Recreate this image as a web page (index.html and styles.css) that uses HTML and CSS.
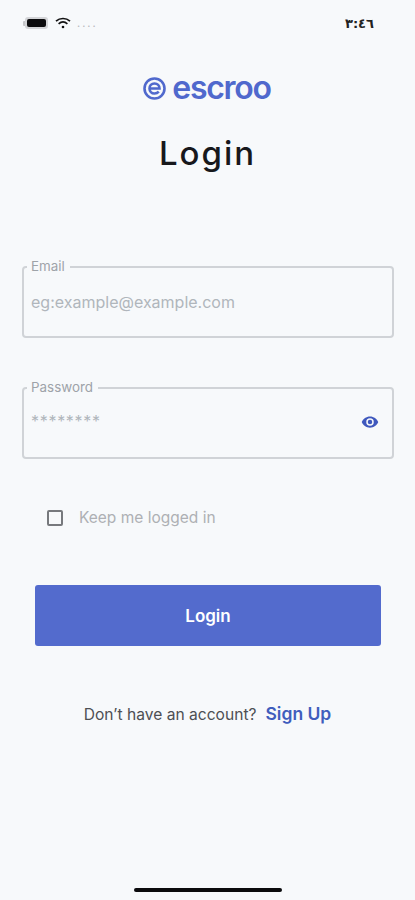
FILE: index.html
```html
<!DOCTYPE html>
<html lang="en">
<head>
    <meta charset="UTF-8">
    <meta name="viewport" content="width=device-width, initial-scale=1.0">
    <title>Login</title>
    <link rel="stylesheet" href="styles.css">
</head>
<body>
    <div class="page">
        <div class="status-bar">
            <div class="status-left">
                <div class="battery-tip"></div>
                <div class="battery"><div class="battery-fill"></div></div>
                <svg class="wifi" width="16" height="12" viewBox="0 0 16 12" fill="none" stroke="#111" stroke-width="1.7">
                    <path d="M1 4.2C5 .6 11 .6 15 4.2"/>
                    <path d="M3.6 6.8c2.6-2.2 6.2-2.2 8.800 0"/>
                    <circle cx="8" cy="10" r="1.3" fill="#111" stroke="none"/>
                </svg>
                <span class="carrier">....</span>
            </div>
            <span class="clock">٣:٤٦</span>
        </div>

        <div class="logo">
            <svg width="23" height="23" viewBox="0 0 23 23" fill="none" stroke="#5069cd" stroke-width="2.6">
                <circle cx="11.5" cy="11.5" r="10"/>
                <path d="M6.500 11.500h10c0-3-2-5-5-5s-5 2.200-5 5 2 5 5 5c1.800 0 3.200-.6 4.300-1.800"/>
            </svg>
            <span class="logo-text">escroo</span>
        </div>

        <h1>Login</h1>

        <form class="login-form">
            <fieldset class="field">
                <legend>Email</legend>
                <div class="field-row">
                    <span class="placeholder">eg:example@example.com</span>
                </div>
            </fieldset>
            <fieldset class="field password-field">
                <legend>Password</legend>
                <div class="field-row">
                    <span class="placeholder stars">********</span>
                    <svg class="eye" width="18" height="18" viewBox="0 0 24 24" fill="#3f58bd">
                        <path d="M12 4.500C7 4.500 2.700 7.600 1 12c1.700 4.400 6 7.500 11 7.500s9.300-3.100 11-7.500c-1.700-4.400-6-7.500-11-7.500zM12 17a5 5 0 1 1 0-10 5 5 0 0 1 0 10zm0-8a3 3 0 1 0 0 6 3 3 0 0 0 0-6z"/>
                    </svg>
                </div>
            </fieldset>

            <label class="keep-row">
                <span class="checkbox"></span>
                <span class="keep-text">Keep me logged in</span>
            </label>

            <button type="button" class="login-btn">Login</button>
        </form>

        <p class="signup-row">
            <span class="signup-text">Don’t have an account?</span>
            <a class="signup-link">Sign Up</a>
        </p>

        <div class="home-bar"></div>
    </div>
</body>
</html>
```

FILE: styles.css
```css
body {
    font-family: Inter, "Liberation Sans", sans-serif;
    margin: 0;
    padding: 0;
    background-color: #f7f9fb;
}
.page {
    height: 900px;
    display: flex;
    flex-direction: column;
    overflow: hidden;
}
.status-bar {
    display: flex;
    justify-content: space-between;
    align-items: center;
    height: 16px;
    padding: 15px 41px 0 23px;
}
.status-left {
    display: flex;
    align-items: center;
}
.battery-tip {
    width: 2px;
    height: 5px;
    background-color: #c4c5c8;
    border-radius: 1px 0 0 1px;
}
.battery {
    width: 23px;
    height: 12px;
    padding: 2px;
    box-sizing: border-box;
    background-color: #d4d5d8;
    border-radius: 3px;
}
.battery-fill {
    height: 100%;
    background-color: #0c0c0e;
    border-radius: 2px;
}
.wifi {
    margin-left: 7px;
}
.carrier {
    margin-left: 6px;
    font-size: 11px;
    line-height: 10px;
    letter-spacing: 2px;
    color: #b5b7bb;
}
.clock {
    font-family: "DejaVu Sans", sans-serif;
    font-size: 13px;
    font-weight: bold;
    letter-spacing: 0.5px;
    color: #222;
}
.logo {
    display: flex;
    justify-content: center;
    align-items: center;
    gap: 6px;
    margin-top: 41px;
    height: 32px;
    padding-right: 1px;
}
.logo-text {
    font-size: 32px;
    line-height: 32px;
    font-weight: 600;
    color: #5069cd;
    letter-spacing: -1.3px;
}
h1 {
    margin: 27px 0 0;
    text-align: center;
    font-size: 33px;
    line-height: 44px;
    font-weight: 500;
    letter-spacing: 2px;
    color: #17181c;
}
.login-form {
    display: flex;
    flex-direction: column;
    margin-top: 85px;
    padding: 0 21px 0 22px;
}
.field {
    height: 78px;
    box-sizing: border-box;
    margin: 0;
    padding: 0 13px 0 7px;
    border: 2px solid #d0d3d7;
    border-radius: 4px;
    min-width: 0;
}
.field legend {
    margin-left: -4px;
    padding: 0 5px 2px 4px;
    font-size: 13.4px;
    line-height: 12px;
    color: #9ea3a9;
}
.field-row {
    display: flex;
    align-items: center;
    justify-content: space-between;
    height: 56px;
}
.password-field {
    margin-top: 43px;
}
.placeholder {
    font-size: 16px;
    color: #b0b6bc;
}
.stars {
    margin-top: -4px;
    letter-spacing: 0.7px;
}
.eye {
    margin-top: -2px;
}
.keep-row {
    display: flex;
    align-items: center;
    margin-top: 49px;
    margin-left: 25px;
}
.checkbox {
    width: 12px;
    height: 12px;
    border: 2px solid #77797d;
    border-radius: 2px;
    flex-shrink: 0;
}
.keep-text {
    margin-left: 16px;
    font-size: 15.5px;
    color: #aeb0b4;
}
.login-btn {
    margin: 58px 13px 0 13px;
    height: 61px;
    background-color: #536bcd;
    color: white;
    border: none;
    border-radius: 3px;
    font-family: inherit;
    font-size: 17px;
    font-weight: 600;
}
.signup-row {
    display: flex;
    justify-content: center;
    align-items: baseline;
    gap: 9px;
    margin: 57px 0 0;
}
.signup-text {
    font-size: 15.6px;
    color: #4d4f54;
}
.signup-link {
    font-size: 17.5px;
    font-weight: 600;
    color: #3f5dbd;
}
.home-bar {
    width: 148px;
    height: 4px;
    margin: auto auto 8px;
    background-color: #0b0b0d;
    border-radius: 2px;
}
```
